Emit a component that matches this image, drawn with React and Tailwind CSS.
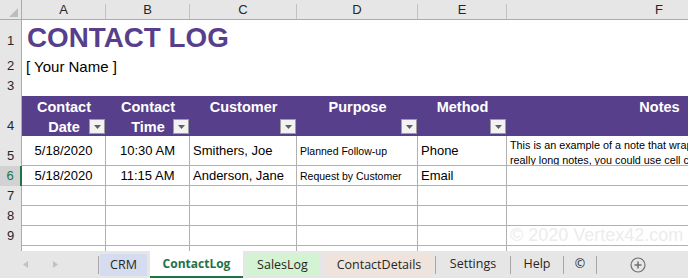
import React from 'react';

const COLS = ['w-[84px]', 'w-[84px]', 'w-[107px]', 'w-[121px]', 'w-[89px]', 'w-[305px]'];
const LETTERS = ['A', 'B', 'C', 'D', 'E', 'F'];
const PURPLE = 'bg-[#573f8b]';

function RowHead({ n, h, active }) {
  return (
    <div
      className={`${h} w-[22px] shrink-0 flex items-end justify-center pb-[2px] text-[13px] leading-[16px] ${
        active
          ? 'bg-[#d2d2d2] text-[#217346] border-r-2 border-[#217346]'
          : 'bg-[#e6e6e6] text-[#262626] border-r border-[#ababab]'
      }`}
    >
      {n}
    </div>
  );
}

function Filter() {
  return (
    <div className="absolute right-[1px] bottom-[2px] w-[16px] h-[15px] bg-[#f2f2f2] border border-[#9c9c9c] flex items-center justify-center">
      <svg width="7" height="4" viewBox="0 0 7 4">
        <path d="M0 0H7L3.5 4Z" fill="#606060" />
      </svg>
    </div>
  );
}

function HCell({ w, lines, filter }) {
  return (
    <div className={`relative ${w} shrink-0 h-full flex flex-col items-center pt-[1px]`}>
      {lines.map((l) => (
        <div key={l} className="whitespace-nowrap">{l}</div>
      ))}
      {filter && <Filter />}
    </div>
  );
}

function Cell({ w, children, kind }) {
  const base = `${w} shrink-0 h-full border-r border-b border-[#b1b1b1] overflow-hidden whitespace-nowrap`;
  if (kind === 'center')
    return <div className={`${base} text-black flex items-center justify-center text-[13px] leading-[16px]`}>{children}</div>;
  if (kind === 'left')
    return <div className={`${base} text-black flex items-center pl-[3px] text-[13px] leading-[16px]`}>{children}</div>;
  if (kind === 'small')
    return <div className={`${base} text-black flex items-center pl-[3px] text-[10.5px] leading-[14px]`}>{children}</div>;
  if (kind === 'notes')
    return <div className={`${base} text-black pl-[3px] pt-[2px] text-[10.8px] leading-[15px]`}>{children}</div>;
  if (kind === 'mark')
    return (
      <div className={`${base} flex items-end pl-[3px] text-[18px] leading-[20px] text-[#ececec]`}>{children}</div>
    );
  return <div className={base}>{children}</div>;
}

function DataRow({ n, h, active, cells = [] }) {
  const kinds = ['center', 'center', 'left', 'small', 'left', 'notes'];
  return (
    <div className={`flex shrink-0 ${h}`}>
      <RowHead n={n} h={h} active={active} />
      {COLS.map((w, i) => {
        const c = cells[i];
        if (c && typeof c === 'object' && c.kind) {
          return (
            <Cell key={i} w={w} kind={c.kind}>
              {c.text}
            </Cell>
          );
        }
        return (
          <Cell key={i} w={w} kind={c ? kinds[i] : undefined}>
            {c}
          </Cell>
        );
      })}
    </div>
  );
}

function Sep() {
  return <div className="w-px h-[18px] bg-[#a6a6a6] shrink-0 self-center" />;
}

export default function App() {
  return (
    <div className="w-[688px] h-[278px] overflow-hidden bg-white flex flex-col font-['Liberation_Sans',Arial,sans-serif]">
      {/* Sheet */}
      <div className="h-[251px] shrink-0 overflow-hidden flex flex-col">
        {/* Column headers */}
        <div className="flex shrink-0 h-[20px] bg-[#e6e6e6] border-b border-[#ababab]">
          <div className="w-[22px] shrink-0 h-full border-r border-[#ababab] flex items-end justify-end pr-[3px] pb-[2px]">
            <svg width="9" height="9" viewBox="0 0 9 9">
              <path d="M9 0V9H0Z" fill="#bdbdbd" />
            </svg>
          </div>
          {COLS.map((w, i) => (
            <div key={i} className={`${w} shrink-0 h-full flex`}>
              <div className="flex-1 flex justify-center pt-[2px] text-[13px] leading-[16px] text-[#262626]">
                {LETTERS[i]}
              </div>
              <div className="w-px h-[15px] self-end bg-[#c2c2c2]" />
            </div>
          ))}
        </div>

        {/* Row 1 */}
        <div className="flex shrink-0 h-[31px]">
          <RowHead n="1" h="h-[31px]" />
          <div className="flex-1 flex items-end pl-[5px]">
            <div className="text-[27.8px] leading-[27px] font-bold text-[#573f8b] whitespace-nowrap">CONTACT LOG</div>
          </div>
        </div>
        {/* Row 2 */}
        <div className="flex shrink-0 h-[25px]">
          <RowHead n="2" h="h-[25px]" />
          <div className="flex-1 flex items-end pl-[4px] pb-[1px]">
            <div className="text-[15px] leading-[17px] text-black whitespace-nowrap">[ Your Name ]</div>
          </div>
        </div>
        {/* Row 3 */}
        <div className="flex shrink-0 h-[20px]">
          <RowHead n="3" h="h-[20px]" />
          <div className="flex-1" />
        </div>
        {/* Row 4 header */}
        <div className="flex shrink-0 h-[40px]">
          <RowHead n="4" h="h-[40px]" />
          <div className={`flex h-full ${PURPLE} text-white font-bold text-[14.5px] leading-[20px]`}>
            <HCell w={COLS[0]} lines={['Contact', 'Date']} filter />
            <HCell w={COLS[1]} lines={['Contact', 'Time']} filter />
            <HCell w={COLS[2]} lines={['Customer']} filter />
            <HCell w={COLS[3]} lines={['Purpose']} filter />
            <HCell w={COLS[4]} lines={['Method']} filter />
            <HCell w={COLS[5]} lines={['Notes']} />
          </div>
        </div>
        <DataRow
          n="5"
          h="h-[30px]"
          cells={[
            '5/18/2020',
            '10:30 AM',
            'Smithers, Joe',
            'Planned Follow-up',
            'Phone',
            <>
              <div>This is an example of a note that wraps within the cell. For</div>
              <div>really long notes, you could use cell comments instead.</div>
            </>,
          ]}
        />
        <DataRow
          n="6"
          h="h-[20px]"
          active
          cells={['5/18/2020', '11:15 AM', 'Anderson, Jane', 'Request by Customer', 'Email', '']}
        />
        <DataRow n="7" h="h-[20px]" />
        <DataRow n="8" h="h-[20px]" />
        <DataRow
          n="9"
          h="h-[20px]"
          cells={[null, null, null, null, null, { kind: 'mark', text: '© 2020 Vertex42.com' }]}
        />
        <DataRow n="" h="h-[20px]" />
      </div>

      {/* Tab bar */}
      <div className="h-[27px] shrink-0 bg-[#e6e6e6] flex items-stretch font-['Open_Sans',sans-serif] text-[12.5px] text-[#262626]">
        <div className="w-[98px] shrink-0 flex items-center pl-[23px]">
          <svg width="5" height="7" viewBox="0 0 5 7">
            <path d="M5 0V7L0 3.5Z" fill="#c2c2c2" />
          </svg>
          <svg className="ml-[25px]" width="5" height="7" viewBox="0 0 5 7">
            <path d="M0 0V7L5 3.5Z" fill="#c2c2c2" />
          </svg>
        </div>
        <Sep />
        <div className="ml-[1px] w-[47px] shrink-0 mt-[3px] mb-[2px] bg-[#d6dcef] flex items-center justify-center">
          CRM
        </div>
        <div className="ml-[3px] w-[93px] shrink-0 bg-white border-b-2 border-[#217346] flex items-center justify-center font-bold text-[#217346] text-[12px]">
          ContactLog
        </div>
        <div className="ml-[2px] w-[75px] shrink-0 mt-[3px] mb-[2px] bg-[#d3f3d3] flex items-center justify-center">
          SalesLog
        </div>
        <div className="ml-[5px] w-[108px] shrink-0 mt-[3px] mb-[2px] bg-[#efe3db] flex items-center justify-center">
          ContactDetails
        </div>
        <div className="ml-[2px] flex">
          <Sep />
        </div>
        <div className="w-[74px] shrink-0 flex items-center justify-center">Settings</div>
        <Sep />
        <div className="w-[52px] shrink-0 flex items-center justify-center">Help</div>
        <Sep />
        <div className="w-[32px] shrink-0 flex items-center justify-center">©</div>
        <Sep />
        <div className="ml-[33px] flex items-center">
          <svg width="16" height="16" viewBox="0 0 16 16">
            <circle cx="8" cy="8" r="7" fill="none" stroke="#707070" strokeWidth="1.2" />
            <path d="M8 4.5V11.5M4.5 8H11.5" stroke="#707070" strokeWidth="1.5" />
          </svg>
        </div>
      </div>
    </div>
  );
}
